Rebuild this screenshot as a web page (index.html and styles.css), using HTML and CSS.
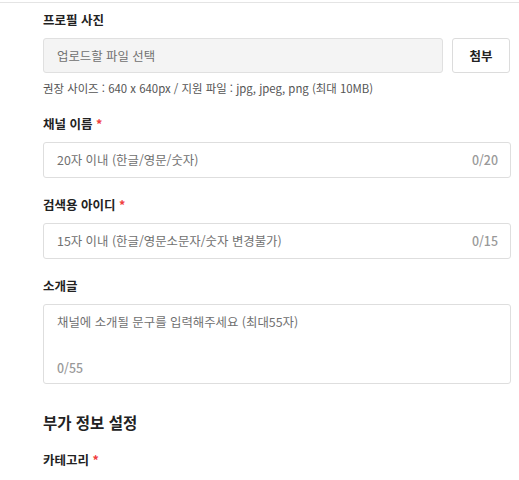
FILE: index.html
```html
<!DOCTYPE html>
<html lang="ko">
  <head>
    <meta charset="UTF-8" />
    <meta name="viewport" content="width=device-width, initial-scale=1.0" />
    <title>채널 정보</title>
    <link rel="stylesheet" href="styles.css">
  </head>
  <body>
    <div class="form">
      <div class="field">
        <label class="label">프로필 사진</label>
        <div class="upload-row">
          <div class="upload-box">업로드할 파일 선택</div>
          <button class="attach">첨부</button>
        </div>
        <p class="hint">권장 사이즈 : 640 x 640px / 지원 파일 : jpg, jpeg, png (최대 10MB)</p>
      </div>

      <div class="field">
        <label class="label">채널 이름 <span class="req">*</span></label>
        <div class="input">
          <span class="placeholder">20자 이내 (한글/영문/숫자)</span>
          <span class="count">0/20</span>
        </div>
      </div>

      <div class="field">
        <label class="label">검색용 아이디 <span class="req">*</span></label>
        <div class="input">
          <span class="placeholder">15자 이내 (한글/영문소문자/숫자 변경불가)</span>
          <span class="count">0/15</span>
        </div>
      </div>

      <div class="field">
        <label class="label">소개글</label>
        <div class="textarea">
          <span class="placeholder">채널에 소개될 문구를 입력해주세요 (최대55자)</span>
          <span class="count">0/55</span>
        </div>
      </div>

      <h2 class="section-title">부가 정보 설정</h2>

      <div class="field">
        <label class="label">카테고리 <span class="req">*</span></label>
      </div>
    </div>
  </body>
</html>
```

FILE: styles.css
```css
body {
  margin: 0;
  padding-top: 2px;
  background: #fff;
  font-family: "Noto Sans CJK KR", "Noto Sans", sans-serif;
  color: #222;
}
.form {
  border-top: 1px solid #e4e4e4;
  padding: 7px 8px 0 43px;
}
.field {
  margin-bottom: 17px;
}
.label {
  display: block;
  font-size: 12.5px;
  font-weight: 700;
  line-height: 20px;
  margin-bottom: 8px;
}
.req {
  color: #f04040;
}

.upload-row {
  display: flex;
  gap: 9px;
  height: 35px;
}
.upload-box {
  flex: 1;
  display: flex;
  align-items: center;
  padding: 0 13px;
  background: #f4f4f4;
  border: 1px solid #e0e0e0;
  border-radius: 3px;
  font-size: 12.4px;
  color: #707070;
}
.attach {
  width: 58px;
  background: #fff;
  border: 1px solid #dcdcdc;
  border-radius: 3px;
  font-family: inherit;
  font-size: 12.5px;
  font-weight: 700;
  color: #222;
  margin-right: 1px;
}
.hint {
  margin: 6px 0 0;
  font-size: 11.4px;
  line-height: 18px;
  color: #555;
}

.input {
  height: 36px;
  box-sizing: border-box;
  display: flex;
  align-items: center;
  justify-content: space-between;
  padding: 0 12px 0 13px;
  border: 1px solid #dedede;
  border-radius: 3px;
}
.textarea {
  height: 80px;
  box-sizing: border-box;
  display: flex;
  flex-direction: column;
  justify-content: space-between;
  padding: 8px 13px 6px;
  border: 1px solid #dedede;
  border-radius: 3px;
}
.placeholder {
  font-size: 12.4px;
  color: #707070;
}
.count {
  font-size: 12.4px;
  font-weight: 500;
  color: #999;
}

.section-title {
  margin: 26px 0 16px;
  font-size: 15.5px;
  line-height: 24px;
  font-weight: 700;
}
```
